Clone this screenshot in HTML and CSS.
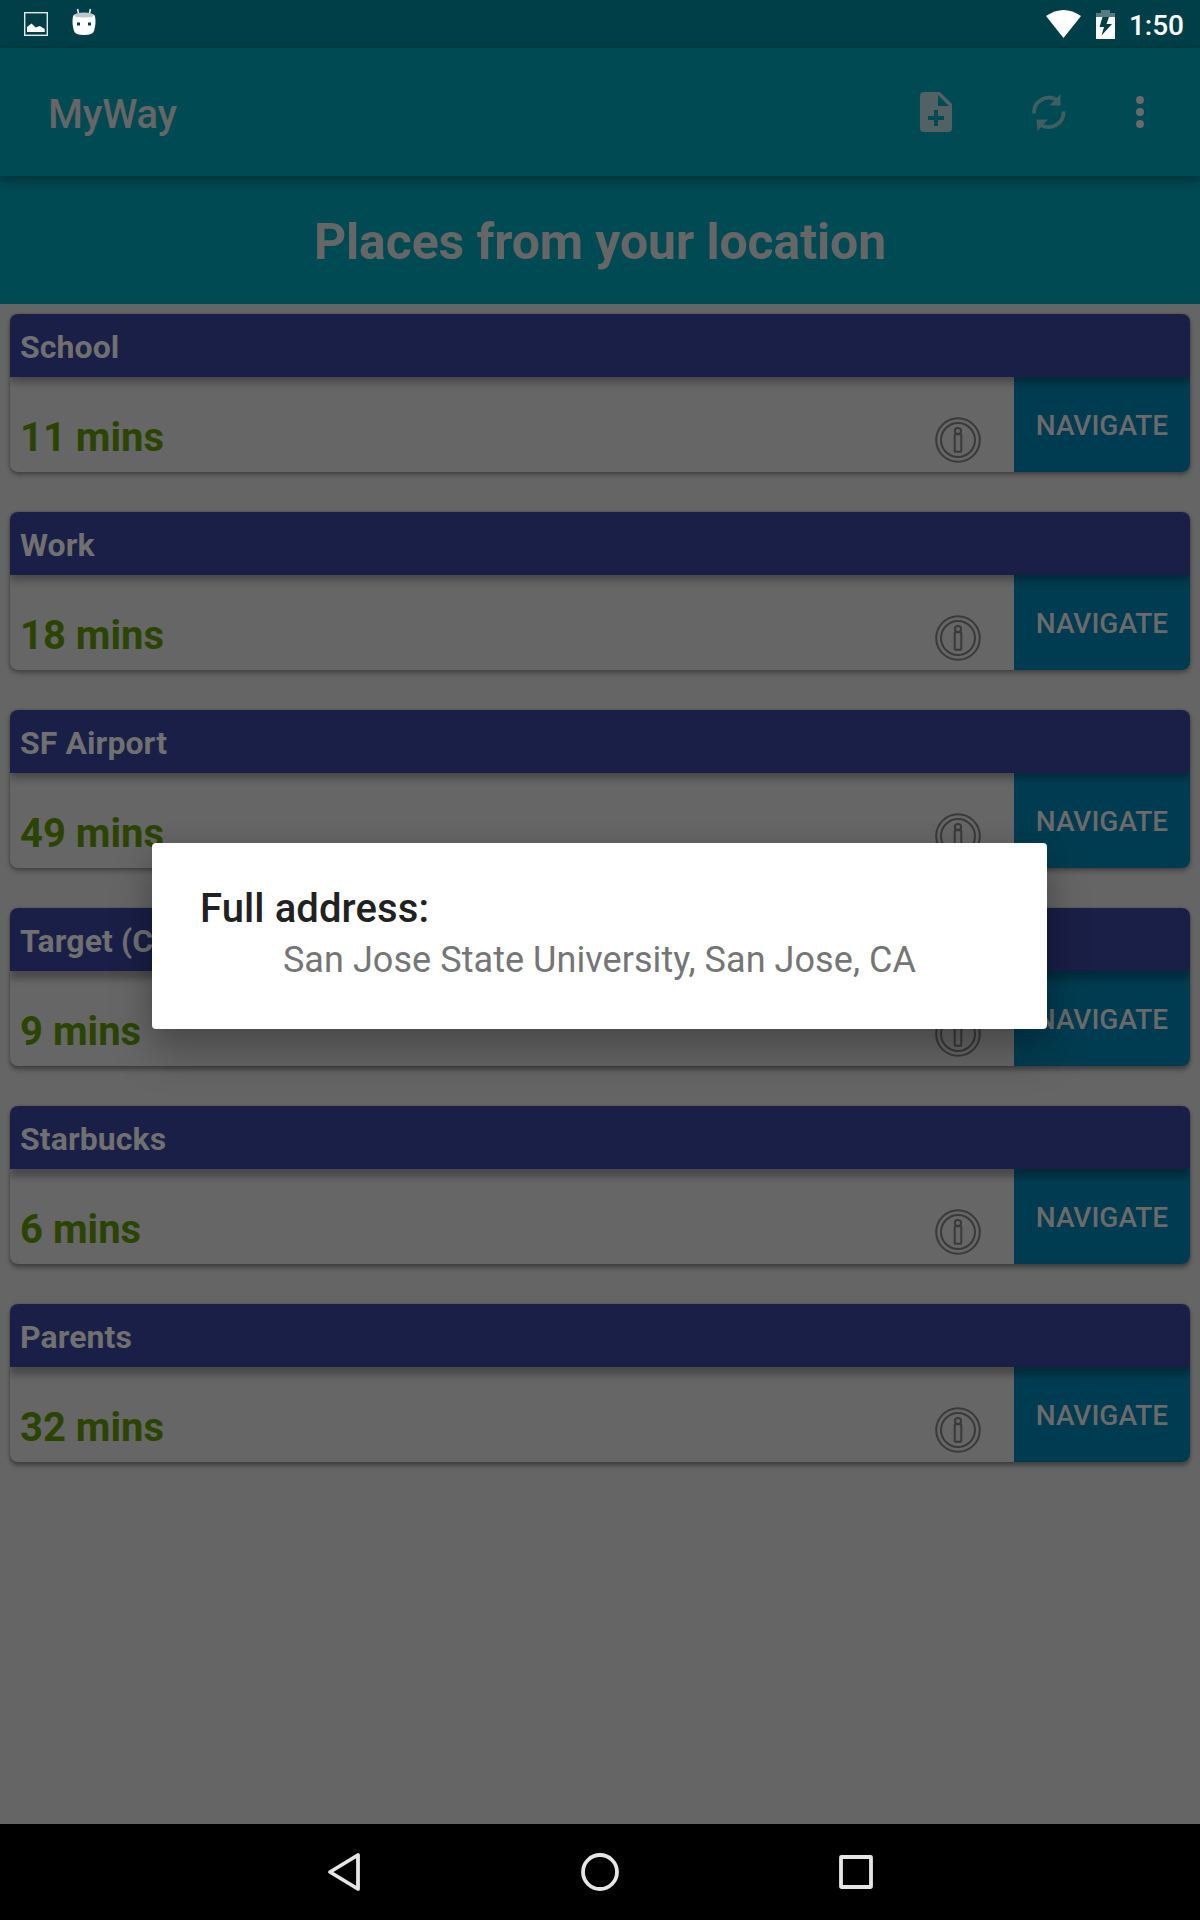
FILE: index.html
```html
<!DOCTYPE html>
<html lang="en">
<head>
<meta charset="utf-8">
<title>MyWay</title>
<link rel="stylesheet" href="styles.css">
</head>
<body>
<svg class="defs" width="0" height="0">
  <symbol id="info" viewBox="0 0 48 48">
    <g fill="none" stroke="#3a3a3a" stroke-width="2">
      <circle cx="24" cy="24" r="21.800"/><circle cx="24" cy="24" r="17"/>
      <circle cx="24" cy="15" r="3.100"/><rect x="20.700" y="18.300" width="6.600" height="17.400" rx=".6"/>
    </g>
  </symbol>
</svg>
<div class="screen">
  <div class="status">
    <svg width="24" height="24" viewBox="0 0 24 24"><rect x=".7" y=".7" width="22.6" height="22.6" fill="none" stroke="#dfe8e9" stroke-width="1.4"/><path d="M3 20v-5l4.500-3.500 4.200 4 4-1.500 5 3v3z" fill="#fff"/></svg>
    <svg class="robot" width="24" height="28" viewBox="0 0 24 28"><path d="M5.500 1l1.500 6M18.500 1l-1.500 6" stroke="#fff" stroke-width="1.500" fill="none"/><path d="M1 8.500Q1 5 12 5t11 3.500C24 13 23.500 18 22 23q-1 4-10 4T2 23C.5 18 0 13 1 8.500z" fill="#fff"/><path d="M2.500 7Q4 4.500 12 4.500T21.500 7 12 9.500 2.500 7z" fill="#b8c9cc"/><path d="M5 14.500h3v3H5zM16 14.500h3v3h-3z" fill="#003f47"/></svg>
    <span class="grow"></span>
    <svg class="wifi" width="35" height="28" viewBox="0 0 35 28"><path d="M0 6Q17.500-6 35 6L17.500 28z" fill="#fff"/></svg>
    <svg class="battery" width="19" height="29" viewBox="0 0 19 29"><path d="M5 0h9v3h5v5H0V3h5z" fill="#547c81"/><path d="M0 7h19v22H0z" fill="#fff"/><path d="M6.500 7H13l-2.500 7H16L5.500 25.500 8 17H3.500z" fill="#003f47"/></svg>
    <span class="clock">1:50</span>
  </div>
  <header class="toolbar">
    <h1 class="app">MyWay</h1>
    <svg class="add" width="32" height="40" viewBox="0 0 32 40"><path fill-rule="evenodd" fill="#526163" d="M4 0h16l12 12v24q0 4-4 4H4q-4 0-4-4V4q0-4 4-4zM18 3v11h11zM14 18v6H8v4h6v6h4v-6h6v-4h-6v-6z"/></svg>
    <svg class="sync" width="34" height="37" viewBox="0 0 34 37"><g fill="none" stroke="#3e5e62" stroke-width="3.800"><path d="M2 19.500A15 15 0 0 1 25 6"/><path d="M31.500 17.500A15 15 0 0 1 9 31"/></g><path d="M28.500 0v11.500H17.500zM4.500 25.500h11.500L5.500 37z" fill="#3e5e62"/></svg>
    <svg class="more" width="8" height="32" viewBox="0 0 8 32"><g fill="#6a6a6a"><circle cx="4" cy="4" r="4"/><circle cx="4" cy="16" r="4"/><circle cx="4" cy="28" r="4"/></g></svg>
  </header>
  <h2 class="heading">Places from your location</h2>
  <main class="list">
    <section class="card"><h3 class="name">School</h3><div class="row"><span class="time">11 mins</span><svg class="info"><use href="#info"/></svg><button class="nav">NAVIGATE</button></div></section>
    <section class="card"><h3 class="name">Work</h3><div class="row"><span class="time">18 mins</span><svg class="info"><use href="#info"/></svg><button class="nav">NAVIGATE</button></div></section>
    <section class="card"><h3 class="name">SF Airport</h3><div class="row"><span class="time">49 mins</span><svg class="info"><use href="#info"/></svg><button class="nav">NAVIGATE</button></div></section>
    <section class="card low"><h3 class="name">Target (C</h3><div class="row"><span class="time">9 mins</span><svg class="info"><use href="#info"/></svg><button class="nav">NAVIGATE</button></div></section>
    <section class="card low"><h3 class="name">Starbucks</h3><div class="row"><span class="time">6 mins</span><svg class="info"><use href="#info"/></svg><button class="nav">NAVIGATE</button></div></section>
    <section class="card low"><h3 class="name">Parents</h3><div class="row"><span class="time">32 mins</span><svg class="info"><use href="#info"/></svg><button class="nav">NAVIGATE</button></div></section>
  </main>
  <footer class="keys">
    <svg width="40" height="40" viewBox="0 0 40 40"><path d="M34 3v34L6 20z"/></svg>
    <svg width="40" height="40" viewBox="0 0 40 40"><circle cx="20" cy="20" r="17"/></svg>
    <svg width="40" height="40" viewBox="0 0 40 40"><rect x="5" y="5" width="30" height="30" rx=".5"/></svg>
  </footer>
  <div class="dialog" role="dialog">
    <h2 class="title">Full address:</h2>
    <p class="address">San Jose State University, San Jose, CA</p>
  </div>
</div>
</body>
</html>
```
FILE: styles.css
```css
* { box-sizing: border-box; margin: 0; }
body { font-family: Roboto, "Liberation Sans", sans-serif; }
.defs { display: block; position: absolute; }
svg { flex: none; display: block; }
.screen {
  position: relative;
  display: flex;
  flex-direction: column;
  width: 1200px;
  height: 1920px;
  background: #656565;
  overflow: hidden;
}
.status {
  display: flex;
  align-items: center;
  height: 48px;
  padding: 0 16px 0 24px;
  background: #003f47;
}
.robot { margin: -4px 0 0 24px; }
.grow { flex: 1; }
.battery { margin: 0 14px 0 15px; }
.clock { padding-top: 3px; color: #fff; font-size: 28px; font-weight: 500; }
.toolbar {
  position: relative;
  z-index: 1;
  display: flex;
  align-items: center;
  height: 128px;
  padding: 0 56px 0 48px;
  background: #004a53;
  box-shadow: 0 5px 10px rgba(0, 0, 0, .3), 0 0 3px rgba(0, 0, 0, .15);
}
.app { flex: 1; padding-top: 4px; color: #666; font-size: 40px; font-weight: 500; letter-spacing: -.2px; }
.sync { margin: 0 70px 0 80px; }
.heading {
  height: 128px;
  padding-top: 2px;
  background: #004a53;
  color: #666;
  font-size: 50px;
  letter-spacing: -.12px;
  line-height: 128px;
  text-align: center;
}
.list { display: flex; flex: 1; flex-direction: column; gap: 40px; padding: 10px; }
.card {
  height: 158px;
  border-radius: 8px;
  background: #666;
  box-shadow: 0 3px 5px rgba(0, 0, 0, .3), 0 0 3px rgba(0, 0, 0, .22);
}
.name {
  position: relative;
  height: 63px;
  padding: 2px 10px 0;
  border-radius: 8px 8px 0 0;
  background: #191f46;
  box-shadow: 0 5px 8px rgba(0, 0, 0, .33);
  clip-path: inset(0 0 -20px 0);
  color: #707070;
  font-size: 32px;
  letter-spacing: .08px;
  line-height: 63px;
}
.low { box-shadow: 0 4px 4px rgba(0, 0, 0, .32), 0 0 3px rgba(0, 0, 0, .2); }
.low .name { box-shadow: 0 8px 7px rgba(0, 0, 0, .28); }
.row { display: flex; align-items: center; height: 95px; }
.time { flex: 1; padding: 26px 0 0 10px; color: #2b4500; font-size: 40px; font-weight: 700; }
.info { width: 48px; height: 48px; margin: 31px 32px 0 0; }
.nav {
  width: 176px;
  height: 95px;
  padding: 2px 0 0;
  border: 0;
  border-radius: 0 0 8px 0;
  background: #003c51;
  color: #6a6a6a;
  font: 500 28px Roboto, sans-serif;
}
.keys {
  display: flex;
  justify-content: center;
  align-items: center;
  gap: 216px;
  height: 96px;
  background: #000;
}
.keys svg { fill: none; stroke: #e6e6e6; stroke-width: 3.8; stroke-linejoin: round; }
.dialog {
  position: absolute;
  z-index: 2;
  left: 152px;
  top: 843px;
  width: 895px;
  height: 186px;
  padding: 42px 48px 0;
  border-radius: 4px;
  background: #fff;
  box-shadow: 0 24px 40px rgba(0, 0, 0, .25), 0 0 24px rgba(0, 0, 0, .1);
}
.title { color: #212121; font-size: 40px; font-weight: 500; letter-spacing: .1px; line-height: 47px; }
.address { padding-top: 7px; color: #757575; font-size: 36px; letter-spacing: .06px; line-height: 42px; text-align: center; }
```
